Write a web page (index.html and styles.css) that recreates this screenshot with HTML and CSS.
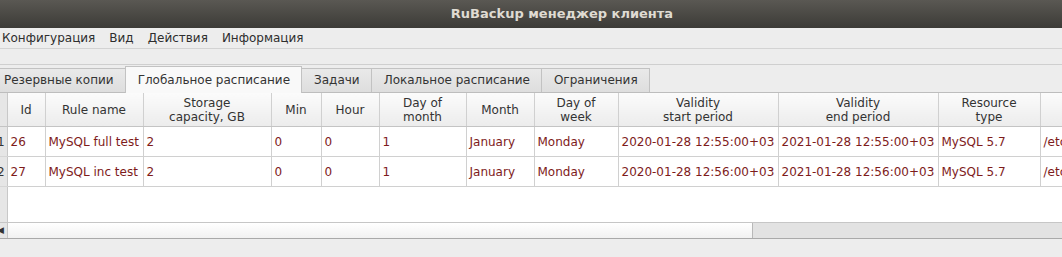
FILE: index.html
```html
<!DOCTYPE html>
<html lang="ru">
<head>
  <meta charset="UTF-8">
  <meta name="viewport" content="width=device-width, initial-scale=1.0">
  <title>RuBackup менеджер клиента</title>
  <link rel="stylesheet" href="styles.css">
</head>
<body>
  <div class="window">
    <div class="titlebar">RuBackup менеджер клиента</div>

    <div class="menubar">
      <span class="menu-item">Конфигурация</span>
      <span class="menu-item">Вид</span>
      <span class="menu-item">Действия</span>
      <span class="menu-item">Информация</span>
    </div>
    <div class="toolbar"></div>

    <div class="tabbar">
      <div class="tab first">Резервные копии</div>
      <div class="tab active">Глобальное расписание</div>
      <div class="tab">Задачи</div>
      <div class="tab">Локальное расписание</div>
      <div class="tab">Ограничения</div>
    </div>

    <div class="pane">
      <div class="table-view">
        <table class="grid">
          <colgroup>
            <col style="width: 7px">
            <col style="width: 38px">
            <col style="width: 98px">
            <col style="width: 128px">
            <col style="width: 50px">
            <col style="width: 58px">
            <col style="width: 87px">
            <col style="width: 68px">
            <col style="width: 84px">
            <col style="width: 160px">
            <col style="width: 160px">
            <col style="width: 102px">
            <col style="width: 22px">
          </colgroup>
          <thead>
            <tr>
              <th class="corner"></th>
              <th>Id</th>
              <th>Rule name</th>
              <th>Storage<br>capacity, GB</th>
              <th>Min</th>
              <th>Hour</th>
              <th>Day of<br>month</th>
              <th>Month</th>
              <th>Day of<br>week</th>
              <th>Validity<br>start period</th>
              <th>Validity<br>end period</th>
              <th>Resource<br>type</th>
              <th></th>
            </tr>
          </thead>
          <tbody>
            <tr>
              <td class="row-head">1</td>
              <td>26</td>
              <td>MySQL full test</td>
              <td>2</td>
              <td>0</td>
              <td>0</td>
              <td>1</td>
              <td>January</td>
              <td>Monday</td>
              <td>2020-01-28 12:55:00+03</td>
              <td>2021-01-28 12:55:00+03</td>
              <td>MySQL 5.7</td>
              <td>/etc</td>
            </tr>
            <tr>
              <td class="row-head">2</td>
              <td>27</td>
              <td>MySQL inc test</td>
              <td>2</td>
              <td>0</td>
              <td>0</td>
              <td>1</td>
              <td>January</td>
              <td>Monday</td>
              <td>2020-01-28 12:56:00+03</td>
              <td>2021-01-28 12:56:00+03</td>
              <td>MySQL 5.7</td>
              <td>/etc</td>
            </tr>
          </tbody>
        </table>
      </div>
      <div class="hscroll">
        <div class="hscroll-arrow">◀</div>
        <div class="hscroll-handle"></div>
        <div class="hscroll-trough"></div>
      </div>
    </div>
  </div>
</body>
</html>
```

FILE: styles.css
```css
body {
  margin: 0;
  background-color: #ededed;
  font-family: "DejaVu Sans", sans-serif;
  font-size: 12px;
  color: #333;
}
.window {
  width: 1062px;
  height: 257px;
  overflow: hidden;
  background-color: #ededed;
}
.titlebar {
  height: 28px;
  line-height: 28px;
  padding-left: 62px;
  text-align: center;
  font-size: 13px;
  font-weight: bold;
  color: #dfdbd2;
  background: linear-gradient(#5a5853, #3c3b37);
}
.menubar {
  height: 20px;
  display: flex;
  align-items: center;
  padding-left: 2px;
  gap: 14px;
  border-bottom: 1px solid #d3d3d3;
  color: #2e2e2e;
}
.toolbar {
  height: 15px;
  border-bottom: 1px solid #cfcfcf;
}
.tabbar {
  height: 27px;
  display: flex;
  align-items: flex-end;
  border-bottom: 1px solid #bdbdbd;
  box-sizing: border-box;
  margin-top: 1px;
}
.tab {
  height: 23px;
  line-height: 23px;
  padding: 0 11px 0 12px;
  border: 1px solid #c2c2c2;
  border-bottom: none;
  margin-right: -1px;
  background: linear-gradient(#e9e9e9, #dedede);
  color: #333;
  white-space: nowrap;
}
.tab.first {
  border-left: none;
  padding-left: 4px;
}
.tab.active {
  height: 26px;
  line-height: 26px;
  margin-bottom: -1px;
  background: #f9f9f9;
  position: relative;
  z-index: 1;
}
.table-view {
  height: 129px;
  overflow: hidden;
  background: linear-gradient(to right, #e6e6e6 7px, #c8c8c8 7px 8px, #fff 8px);
}
.grid {
  border-collapse: collapse;
  table-layout: fixed;
  width: 1062px;
}
.grid th {
  height: 33px;
  padding: 2px 2px 0;
  font-weight: normal;
  line-height: 14px;
  text-align: center;
  color: #333;
  background: linear-gradient(#fbfbfb, #ececec);
  border-right: 1px solid #d0d0d0;
  border-bottom: 1px solid #c4c4c4;
  white-space: nowrap;
  overflow: hidden;
  box-sizing: border-box;
}
.grid th.corner {
  background: #e6e6e6;
  border-right: 1px solid #c8c8c8;
}
.grid td {
  height: 30px;
  padding: 2px 0 0 3px;
  color: #7e1b1b;
  background-color: #fff;
  border-right: 1px solid #d0d0d0;
  border-bottom: 1px solid #d0d0d0;
  white-space: nowrap;
  overflow: hidden;
  box-sizing: border-box;
}
.grid td.row-head {
  padding: 2px 0 0 0;
  text-indent: -3px;
  color: #333;
  background-color: #e6e6e6;
  border-right: 1px solid #c8c8c8;
  border-bottom: 1px solid #d6d6d6;
  text-overflow: clip;
}
.hscroll {
  height: 15px;
  display: flex;
  border-top: 1px solid #c6c6c6;
  border-bottom: 1px solid #a9a9a9;
}
.hscroll-arrow {
  width: 7px;
  overflow: hidden;
  font-size: 9px;
  line-height: 15px;
  text-indent: -3px;
  color: #333;
  background-color: #e6e6e6;
  border-right: 1px solid #c6c6c6;
}
.hscroll-handle {
  width: 744px;
  background: linear-gradient(#ffffff, #f1f1f1);
  border-right: 1px solid #b8b8b8;
}
.hscroll-trough {
  flex: 1;
  background-color: #e2e2e2;
}
```
